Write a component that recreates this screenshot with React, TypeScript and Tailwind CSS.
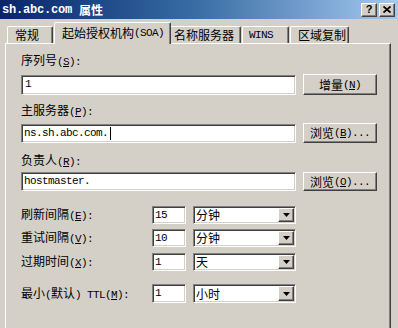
import React from "react";

const M = ({ children }: { children: React.ReactNode }) => (
  <span className="font-['Liberation_Mono',monospace] text-[11px] tracking-[-0.6px]">{children}</span>
);

const sunken =
  "bg-white border border-t-[#808080] border-l-[#808080] border-b-white border-r-white shadow-[inset_1px_1px_0_#404040,inset_-1px_-1px_0_#d4d0c8]";
const raised =
  "bg-[#d4d0c8] border border-t-white border-l-white border-b-[#404040] border-r-[#404040] shadow-[inset_-1px_-1px_0_#808080]";

const Label = ({ zh, acc, extra }: { zh: React.ReactNode; acc: string; extra?: string }) => (
  <div className="leading-[14px] text-[12px] whitespace-nowrap">
    {zh}
    {extra}
    <M>
      (<u>{acc}</u>):
    </M>
  </div>
);

const Btn = ({ zh, acc, dots, h }: { zh: string; acc: string; dots?: boolean; h: string }) => (
  <div className={`${raised} w-[74px] ${h} flex items-center justify-center text-[12px] leading-[14px] whitespace-nowrap`}>
    {zh}
    <M>
      (<u>{acc}</u>){dots ? "..." : ""}
    </M>
  </div>
);

const Arrow = () => (
  <div className={`${raised} w-[16px] h-full flex items-center justify-center`}>
    <svg width="7" height="4" viewBox="0 0 7 4">
      <polygon points="0,0 7,0 3.5,4" fill="#000" />
    </svg>
  </div>
);

const Row = ({
  zh,
  acc,
  num,
  unit,
  h,
  mt,
  ttl,
}: {
  zh: string;
  acc: string;
  num: string;
  unit: string;
  h: string;
  mt: string;
  ttl?: boolean;
}) => (
  <div className={`flex items-center ${mt} ${h}`}>
    <div className="w-[131px] leading-[14px] text-[12px] whitespace-nowrap">
      {ttl ? (
        <>
          最小<M>(</M>默认<M>) TTL(<u>M</u>):</M>
        </>
      ) : (
        <>
          {zh}
          <M>
            (<u>{acc}</u>):
          </M>
        </>
      )}
    </div>
    <div className={`${sunken} w-[34px] h-full flex items-center pl-[2px]`}>
      <M>{num}</M>
    </div>
    <div className={`${sunken} ml-[7px] w-[103px] h-full flex items-center justify-between pl-[2px] pr-[1px] py-[1px]`}>
      <span className="text-[12px] leading-[14px]">{unit}</span>
      <Arrow />
    </div>
  </div>
);

export default function App() {
  return (
    <div className="w-[398px] h-[328px] overflow-hidden bg-[#d4d0c8] text-black font-['Noto_Sans_CJK_SC','Liberation_Sans',sans-serif] text-[12px]">
      {/* Title bar */}
      <div className="h-[19px] bg-gradient-to-r from-[#0a246a] via-[#3a6ea5] to-[#a6caf0] flex items-center justify-between">
        <div className="pl-[2px] text-white font-bold whitespace-nowrap leading-[14px] flex items-center">
          <span className="font-['Liberation_Mono',monospace] text-[12px] tracking-[-0.2px]">sh.abc.com</span>
          <span className="ml-[7px] text-[12px]">属性</span>
        </div>
        <div className="flex items-center gap-[2px] pr-[3px]">
          <div className={`${raised} w-[16px] h-[14px] flex items-center justify-center font-['Liberation_Sans'] font-bold text-[11px] leading-none`}>
            ?
          </div>
          <div className={`${raised} w-[16px] h-[14px] flex items-center justify-center`}>
            <svg width="8" height="7" viewBox="0 0 8 7">
              <path d="M0.5 0.5 L7.5 6.5 M7.5 0.5 L0.5 6.5" stroke="#000" strokeWidth="1.8" />
            </svg>
          </div>
        </div>
      </div>

      {/* Tabs */}
      <div className="h-[24px] flex items-end pl-[7px]">
        <div className="h-[17px] w-[46px] border-t border-l border-t-white border-l-white border-r border-r-[#404040] rounded-tl-[2px] rounded-tr-[2px] shadow-[inset_-1px_0_0_#808080] flex items-center pl-[7px] text-[12px] leading-[14px]">
          常规
        </div>
        <div className="relative z-10 h-[22px] mb-[-1px] w-[117px] ml-[1px] bg-[#d4d0c8] border-t border-l border-t-white border-l-white border-r border-r-[#404040] rounded-tl-[2px] rounded-tr-[2px] shadow-[inset_-1px_0_0_#808080] flex items-start pt-[3px] pl-[7px] text-[12px] leading-[14px] whitespace-nowrap">
          起始授权机构<M>(SOA)</M>
        </div>
        <div className="h-[17px] w-[70px] border-t border-r border-t-white border-r-[#404040] rounded-tr-[2px] shadow-[inset_-1px_0_0_#808080] flex items-center pl-[3px] text-[12px] leading-[14px] whitespace-nowrap">
          名称服务器
        </div>
        <div className="h-[17px] w-[47px] ml-[1px] border-t border-l border-t-white border-l-white border-r border-r-[#404040] rounded-tl-[2px] rounded-tr-[2px] shadow-[inset_-1px_0_0_#808080] flex items-center pl-[6px] leading-[14px]">
          <M>WINS</M>
        </div>
        <div className="h-[17px] w-[59px] ml-[1px] border-t border-l border-t-white border-l-white border-r border-r-[#404040] rounded-tl-[2px] rounded-tr-[2px] shadow-[inset_-1px_0_0_#808080] flex items-center pl-[7px] text-[12px] leading-[14px] whitespace-nowrap">
          区域复制
        </div>
      </div>

      {/* Panel */}
      <div className="ml-[5px] w-[386px] h-[300px] border-t border-l border-r border-t-white border-l-white border-r-[#404040] shadow-[inset_-1px_0_0_#808080] pl-[15px] flex flex-col">
        <div className="mt-[9px]">
          <Label zh="序列号" acc="S" />
        </div>
        <div className="mt-[5px] flex items-center gap-[7px]">
          <div className={`${sunken} w-[275px] h-[20px] flex items-center pl-[3px]`}>
            <M>1</M>
          </div>
          <Btn zh="增量" acc="N" h="h-[21px]" />
        </div>

        <div className="mt-[8px]">
          <Label zh="主服务器" acc="P" />
        </div>
        <div className="mt-[4px] flex items-center gap-[7px]">
          <div className={`${sunken} w-[275px] h-[19px] flex items-center pl-[2px]`}>
            <M>ns.sh.abc.com.</M>
            <span className="ml-[2px] w-[1px] h-[13px] bg-black" />
          </div>
          <Btn zh="浏览" acc="B" dots h="h-[20px]" />
        </div>

        <div className="mt-[10px]">
          <Label zh="负责人" acc="R" />
        </div>
        <div className="mt-[3px] flex items-center gap-[7px]">
          <div className={`${sunken} w-[275px] h-[19px] flex items-center pl-[2px]`}>
            <M>hostmaster.</M>
          </div>
          <Btn zh="浏览" acc="O" dots h="h-[19px]" />
        </div>

        <Row zh="刷新间隔" acc="E" num="15" unit="分钟" h="h-[18px]" mt="mt-[15px]" />
        <Row zh="重试间隔" acc="V" num="10" unit="分钟" h="h-[18px]" mt="mt-[5px]" />
        <Row zh="过期时间" acc="X" num="1" unit="天" h="h-[18px]" mt="mt-[6px]" />
        <Row zh="" acc="M" num="1" unit="小时" h="h-[19px]" mt="mt-[13px]" ttl />
      </div>
    </div>
  );
}
